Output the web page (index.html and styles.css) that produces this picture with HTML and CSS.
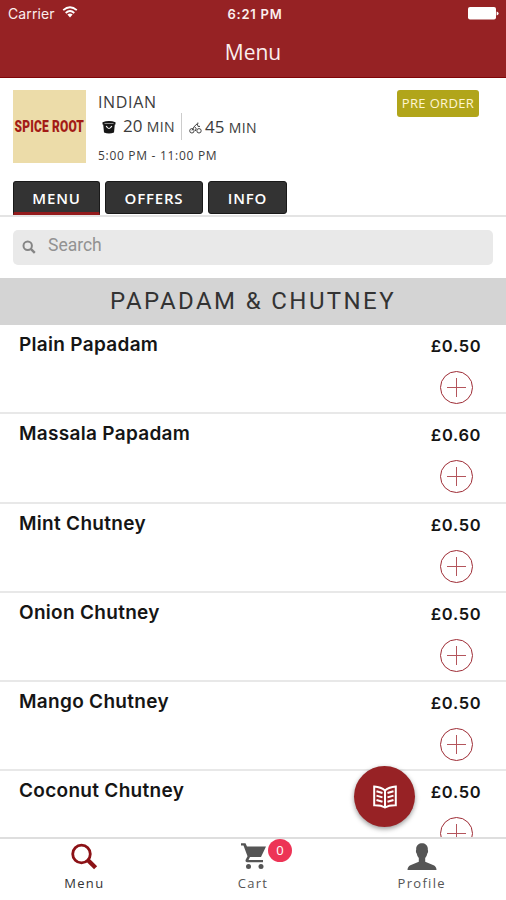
FILE: index.html
```html
<!DOCTYPE html>
<html lang="en">
<head>
<meta charset="utf-8">
<title>Menu</title>
<link rel="stylesheet" href="styles.css">
</head>
<body>
<header class="header">
  <div class="status">
    <div class="carrier"><span>Carrier</span>
      <svg width="16" height="12" viewBox="0 0 16 12" fill="none" stroke="#fff" stroke-width="1.8"><path d="M1.2 4.2Q8-1.8 14.8 4.2M3.7 7Q8 3 12.3 7"/><path d="M5.4 8.6Q8 6.6 10.6 8.6L8 11.4Z" fill="#fff" stroke="none"/></svg>
    </div>
    <div class="time">6:21 PM</div>
    <svg class="battery" width="31" height="13" viewBox="0 0 31 13" fill="#fff"><rect width="28" height="12.5" rx="2"/><path d="M28.6 4.5q2 .3 2 2t-2 2z"/></svg>
  </div>
  <h1 class="title">Menu</h1>
</header>
<section class="restaurant">
  <div class="summary">
    <div class="logo"><span>SPICE ROOT</span></div>
    <div class="details">
      <div class="cuisine">INDIAN</div>
      <div class="times">
        <svg class="bucket" width="14" height="13" viewBox="0 0 14 13"><path d="M.5 1.2Q7-1 13.5 1.2V3.5H12.8L12 11.5Q7 13.5 2 11.5L1.200 3.500H.5Z" fill="#161616"/><path d="M2.500 2.500H11.500" fill="none" stroke="#aaa" stroke-width=".8"/><path d="M4.200 5Q7 10 9.800 5" fill="none" stroke="#fff" stroke-width="1.200"/></svg>
        <span class="pickup">20 <small>MIN</small></span>
        <svg class="bike" width="13" height="12" viewBox="0 0 13 12" fill="none" stroke="#444"><circle cx="2.9" cy="8.8" r="2.2"/><circle cx="10" cy="8.8" r="2.2"/><path d="M3 8.5L5.2 4.5 8.2 1.8 9 4.4H11M5.2 4.5L7.2 6.3 6.3 9M8 1.2H9.5"/></svg>
        <span class="delivery">45 <small>MIN</small></span>
      </div>
      <div class="hours">5:00 PM - 11:00 PM</div>
    </div>
    <div class="preorder">PRE ORDER</div>
  </div>
  <nav class="tabs">
    <a class="tab tab-menu">MENU</a>
    <a class="tab tab-offers">OFFERS</a>
    <a class="tab tab-info">INFO</a>
  </nav>
</section>
<div class="search-wrap">
  <div class="search">
    <svg width="14" height="14" viewBox="0 0 14 14" fill="none" stroke="#858585" stroke-width="2"><circle cx="5.7" cy="5.7" r="4.2"/><path d="M8.8 8.8L12.8 12.8" stroke-width="2.4"/></svg>
    <span>Search</span>
  </div>
</div>
<h2 class="category"><span>PAPADAM &amp; CHUTNEY</span></h2>
<main class="list">
  <div class="item"><span class="name">Plain Papadam</span><div class="buy"><span class="price">£0.50</span><i class="add"></i></div></div>
  <div class="item"><span class="name">Massala Papadam</span><div class="buy"><span class="price">£0.60</span><i class="add"></i></div></div>
  <div class="item"><span class="name">Mint Chutney</span><div class="buy"><span class="price">£0.50</span><i class="add"></i></div></div>
  <div class="item"><span class="name">Onion Chutney</span><div class="buy"><span class="price">£0.50</span><i class="add"></i></div></div>
  <div class="item"><span class="name">Mango Chutney</span><div class="buy"><span class="price">£0.50</span><i class="add"></i></div></div>
  <div class="item"><span class="name">Coconut Chutney</span><div class="buy"><span class="price">£0.50</span><i class="add"></i></div></div>
</main>
<div class="fab">
  <svg width="24" height="24" viewBox="0 0 24 24" fill="none" stroke="#fff" stroke-width="2"><path d="M1.2 1.500Q8 2 12 5.400 16 2 22.800 1.500V20.200Q16 20 12 22.500 8 20 1.200 20.200ZM12 5.400V22.500"/><path d="M3.500 6.200L9.500 8M3.500 10.600L9.500 12.400M3.500 15L9.500 16.800M20.500 6.200L14.500 8M20.500 10.600L14.500 12.400M20.500 15L14.500 16.800"/></svg>
</div>
<footer class="bottom">
  <a class="nav"><svg width="28" height="28" viewBox="0 0 28 28" fill="none" stroke="#8c1216"><circle cx="11.500" cy="11.500" r="8.800" stroke-width="2.800"/><path d="M17.800 17.500L25.600 25.200" stroke-width="4.400"/></svg><span class="nav-label active">Menu</span></a>
  <a class="nav"><div class="cart"><svg width="28" height="28" viewBox="0 0 28 28" fill="#555"><path d="M2 .800H6.500L8 4H27L22 14.500H11L9.500 17.500H24V19.800H8Q5.800 19.300 6.800 17L8.500 13.800 4.500 3H2Z"/><circle cx="9.500" cy="24" r="2.500"/><circle cx="22" cy="24" r="2.500"/></svg><b class="badge">0</b></div><span class="nav-label">Cart</span></a>
  <a class="nav"><svg width="32" height="30" viewBox="0 0 32 30" fill="#555"><path d="M10 8C9-1 23-1 22 8Q22.800 10 21.500 12 21 15 19.300 16.500V20.500L28 24Q31 25.500 31 29H1Q1 25.500 4 24L12.700 20.500V16.500Q11 15 10.500 12 9.200 10 10 8Z"/></svg><span class="nav-label">Profile</span></a>
</footer>
</body>
</html>
```

FILE: styles.css
```css
* { box-sizing: border-box; }
body { margin: 0; width: 506px; height: 900px; overflow: hidden; display: flex; flex-direction: column; background: #fff; color: #151515; font-family: "Open Sans", "Noto Sans", sans-serif; position: relative; }
svg { display: block; flex: none; }
.header { height: 78px; flex: none; background: #962224; border-bottom: 1px solid #800508; color: #fbeeee; }
.status { height: 27px; display: grid; grid-template-columns: 1fr 100px 1fr; align-items: center; padding: 0 7px 0 8px; font: 14px/26px Inter, sans-serif; }
.carrier { display: flex; align-items: center; gap: 7px; }
.carrier span { letter-spacing: .1px; }
.carrier svg { margin-top: -3px; }
.time { font-size: 13px; font-weight: 600; letter-spacing: .75px; text-align: center; white-space: nowrap; margin-left: 3px; line-height: 24px; }
.battery { justify-self: end; }
.title { margin: 0; text-align: center; font: 21px/51px "Open Sans", sans-serif; letter-spacing: 0; }
.restaurant { height: 139px; flex: none; border-bottom: 2px solid #e4e4e4; padding: 12px 13px 0; }
.summary { display: flex; height: 91px; }
.logo { width: 73px; height: 73px; background: #ecdca9; color: #a31b16; display: flex; align-items: center; justify-content: center; }
.logo span { font: 900 16px/20px Roboto, sans-serif; letter-spacing: .2px; white-space: nowrap; transform: scaleX(.75); }
.details { margin-left: 12px; flex: 1; color: #3c3c3c; }
.cuisine { font-size: 16px; line-height: 24px; letter-spacing: .65px; }
.times { display: flex; align-items: center; height: 27px; font-size: 17px; white-space: nowrap; }
.times small { font-size: 14px; letter-spacing: .3px; }
.bucket { margin: 0 7px 0 4px; }
.pickup { width: 59px; border-right: 1px solid #ccc; line-height: 26px; margin-top: -2px; }
.bike { margin: 0 3px 0 7px; }
.delivery { margin-top: -2px; }
.hours { font-size: 12px; line-height: 30px; letter-spacing: .7px; }
.preorder { width: 82px; height: 27px; margin-right: 14px; background: #b1a51a; color: #fff5d2; border-radius: 3px; font-size: 13px; line-height: 27px; letter-spacing: .35px; text-align: center; white-space: nowrap; }
.tabs { display: flex; gap: 5px; align-items: flex-start; }
.tab { height: 33px; background: #333; color: #fff; border: 1px solid #191919; border-radius: 3px; text-align: center; font-size: 15px; font-weight: 600; line-height: 32px; letter-spacing: .8px; }
.tab-menu { width: 87px; height: 34px; border-bottom: 3px solid #931b1c; border-radius: 3px 3px 0 0; }
.tab-offers { width: 98px; }
.tab-info { width: 79px; }
.search-wrap { height: 61px; flex: none; padding: 13px 13px 0; }
.search { height: 35px; background: #e9e9e9; border-radius: 5px; display: flex; align-items: center; padding-left: 9px; gap: 12px; font: 17.5px/30px Roboto, sans-serif; color: #929292; }
.search svg { margin-top: -1px; }
.search span { margin-top: -5px; }
.category { height: 47px; flex: none; margin: 0; background: #d4d4d4; text-align: center; color: #333; font: 24px/47px Roboto, sans-serif; letter-spacing: 2.4px; }
.list { flex: 1; overflow: hidden; }
.item { height: 89.3px; border-bottom: 2px solid #e8e8e8; display: flex; justify-content: space-between; padding: 6px 24px 0 19px; }
.name { font: 600 19px/26px Inter, sans-serif; letter-spacing: .3px; margin-top: 1px; }
.buy { width: 52px; display: flex; flex-direction: column; align-items: center; }
.price { font: 600 16.5px/30px Inter, sans-serif; letter-spacing: .65px; white-space: nowrap; }
.add { width: 33px; height: 33px; border: 1px solid #9e2c35; border-radius: 50%; margin-top: 10px; background: linear-gradient(#b4555c, #b4555c) center / 19px 1px no-repeat, linear-gradient(#b4555c, #b4555c) center / 1px 19px no-repeat; flex: none; }
.fab { position: absolute; left: 354px; top: 766px; width: 61px; height: 61px; border-radius: 50%; background: #972225; box-shadow: 0 2px 5px rgba(0,0,0,.4); display: grid; place-items: center; }
.bottom { height: 63px; flex: none; border-top: 2px solid #dedede; display: flex; background: #fff; }
.nav { flex: 1; display: flex; flex-direction: column; align-items: center; padding-top: 3px; color: #555; }
.nav svg { height: 29px; }
.cart { position: relative; }
.badge { position: absolute; left: 29px; top: -3px; width: 24px; height: 23px; border-radius: 50%; background: #ed3456; color: #fff; font: 13px/23px "Open Sans", sans-serif; text-align: center; }
.nav-label { font-size: 13px; line-height: 24px; letter-spacing: 1.3px; }
.active { color: #333; }
```
